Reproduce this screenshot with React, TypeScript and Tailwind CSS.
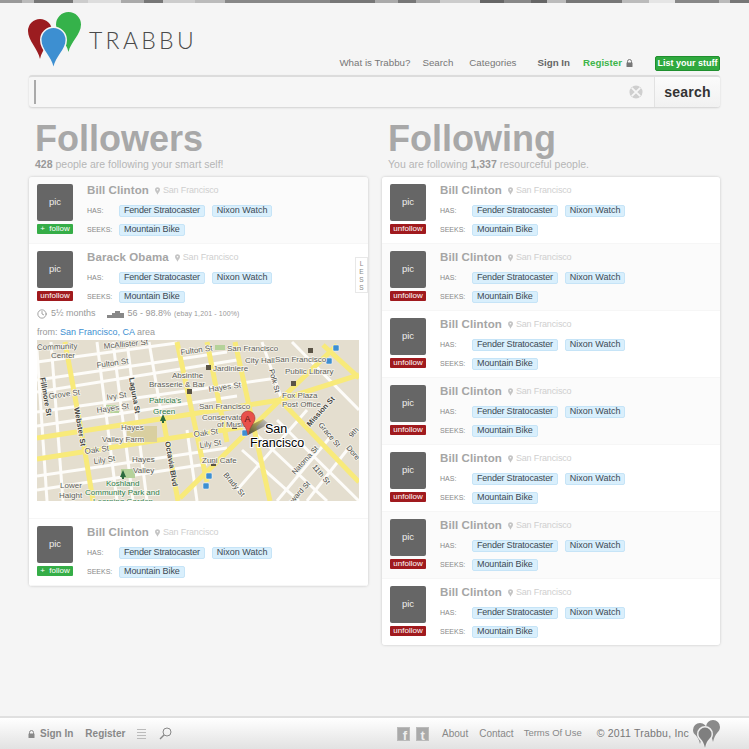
import React from "react";
import { Clock } from "lucide-react";

const font = "font-['Liberation_Sans',Arial,sans-serif]";

const strip: [number, string][] = [
  [22, "#999"], [12, "#bbb"], [39, "#777"], [15, "#ccc"], [33, "#ddd"], [23, "#aaa"], [19, "#777"], [32, "#ccc"],
  [30, "#bbb"], [105, "#888"], [45, "#777"], [23, "#aaa"], [18, "#777"], [24, "#aaa"], [40, "#ccc"], [24, "#666"],
  [27, "#888"], [16, "#666"], [19, "#bbb"], [56, "#777"], [27, "#bbb"], [26, "#e5e5e5"], [44, "#888"], [11, "#bbb"], [19, "#777"],
];

const pin = (cx: number, cy: number, r: number, tip: number) =>
  `M${cx - r} ${cy}A${r} ${r} 0 1 1 ${cx + r} ${cy}C${cx + r} ${cy + r * 0.8} ${cx + 2} ${tip - 10} ${cx} ${tip}C${cx - 2} ${tip - 10} ${cx - r} ${cy + r * 0.8} ${cx - r} ${cy}Z`;

const Logo = () => (
  <svg width="54" height="56" viewBox="28 12 54 56" className="shrink-0">
    <path d={pin(40, 31, 12, 59)} fill="#9b1c20" />
    <path d={pin(68.5, 24.5, 12.5, 52)} fill="#35b24a" />
    <path d={pin(53.5, 40, 13.5, 68)} fill="#f5f5f5" />
    <path d={pin(53.5, 40, 12, 66.5)} fill="#3d8fd1" />
  </svg>
);

const Lock = ({ color }: { color: string }) => (
  <svg width="7" height="8" viewBox="0 0 7 8" className="shrink-0">
    <path d="M1.5 4V2.5a2 2 0 0 1 4 0V4" fill="none" stroke={color} strokeWidth="1" />
    <rect x="0.5" y="3.5" width="6" height="4.5" rx="0.5" fill={color} />
  </svg>
);

const Header = () => (
  <header className="h-[73px] pl-[28px] pr-[29px] flex justify-between">
    <div className="flex pt-[9px]">
      <Logo />
      <span className="ml-[7px] mt-[14px] text-[23px] leading-[28px] tracking-[3.3px] text-[#4a4a4a] font-light font-['Lato',sans-serif] h-fit">TRABBU</span>
    </div>
    <nav className="flex items-center h-fit mt-[52px] text-[9.750px] leading-[16px] text-[#777] whitespace-nowrap">
      <a>What is Trabbu?</a>
      <a className="ml-[12px]">Search</a>
      <a className="ml-[16px]">Categories</a>
      <a className="ml-[21px] font-bold text-[#666]">Sign In</a>
      <a className="ml-[13px] font-bold text-[#3db54a]">Register</a>
      <span className="ml-[4px]"><Lock color="#777" /></span>
      <a className="ml-[22px] w-[65px] h-[15px] leading-[12px] text-center text-[9px] font-bold text-white bg-[#2fa93e] border border-[#1f8f2e] rounded-[2px]">List your stuff</a>
    </nav>
  </header>
);

const SearchBar = () => (
  <div className="mx-[29px] h-[32px] -mt-px flex rounded-[3px] border-t-2 border-[#dcdcdc] shadow-[0_1px_2px_rgba(0,0,0,0.15)] bg-[#f6f6f6]">
    <div className="flex-1 flex items-center pl-[5px] pr-[11px]">
      <span className="w-[2px] h-[24px] bg-[#aaa]" />
      <svg width="14" height="14" viewBox="0 0 15 15" className="ml-auto">
        <circle cx="7.5" cy="7.500" r="7" fill="#cfcfcf" />
        <path d="M3 3l9 9M12 3l-9 9" stroke="#f6f6f6" strokeWidth="2" />
      </svg>
    </div>
    <button className="w-[66px] border-l border-[#e2e2e2] text-[14px] font-bold tracking-[0.2px] text-[#333] bg-gradient-to-b from-[#fbfbfb] to-[#f1f1f1] rounded-r-[3px]">search</button>
  </div>
);

const Tag = ({ children, className }: { children: React.ReactNode; className?: string }) => (
  <span className={`h-[12px] px-[4px] flex items-center text-[9px] whitespace-nowrap text-[#3d4a54] bg-[#d9effc] border border-[#c6e4f7] rounded-[2px] ${className ?? ""}`}>{children}</span>
);

const PlacePin = () => (
  <svg width="5" height="8" viewBox="0 0 6 9" className="shrink-0">
    <path d="M3 9C2 6.500 0 5 0 3a3 3 0 0 1 6 0C6 5 4 6.500 3 9Z" fill="#c4c4c4" />
    <circle cx="3" cy="3" r="1" fill="#fff" />
  </svg>
);

const Person = ({ name, follow, shade, children }: { name: string; follow: boolean; shade?: boolean; children?: React.ReactNode }) => (
  <div className={`pl-[8px] pr-[8px] pt-[7px] pb-[7px] border-b border-[#f6f6f6] last:border-b-0 relative ${shade ? "bg-[#fbfbfb]" : "bg-white"}`}>
    <div className="flex">
      <div className="w-[36px] shrink-0">
        <div className="h-[37px] flex items-center justify-center bg-[#666] rounded-[2px] text-[9.500px] text-[#eee]">pic</div>
        {follow ? (
          <div className="mt-[3px] h-[10px] leading-[10px] text-center text-[8px] text-white bg-[#35ad47] rounded-[1px]">+&nbsp;&nbsp;follow</div>
        ) : (
          <div className="mt-[3px] h-[10px] leading-[10px] text-center text-[8px] text-white bg-[#a01a1e] rounded-[1px]">unfollow</div>
        )}
      </div>
      <div className="ml-[14px] flex-1">
        <div className="flex items-center h-[13px]">
          <span className="text-[11.500px] font-bold tracking-[0.1px] text-[#a5a5a5]">{name}</span>
          <span className="ml-[6px]"><PlacePin /></span>
          <span className="ml-[3px] text-[9px] tracking-[-0.15px] text-[#cfcfcf]">San Francisco</span>
        </div>
        <div className="mt-[8px] flex items-center">
          <span className="w-[32px] text-[7px] text-[#888]">HAS:</span>
          <Tag className="tracking-[-0.2px]">Fender Stratocaster</Tag>
          <span className="ml-[7px]"><Tag>Nixon Watch</Tag></span>
        </div>
        <div className="mt-[7px] flex items-center">
          <span className="w-[32px] text-[7px] text-[#888]">SEEKS:</span>
          <Tag className="tracking-[-0.1px]">Mountain Bike</Tag>
        </div>
      </div>
    </div>
    {children}
  </div>
);

const yellow = [
  "M28 2L48 112L56 161", "M0 98L136 77L243 60", "M0 119L206 87", "M126 78L141 161", "M140 2L170 142",
  "M170 2L190 102", "M198 2L233 161", "M143 158L243 60L300 5", "M243 60L322 142", "M286 5L322 38", "M243 60L322 35",
];
const white = [
  "M0 22L140 3", "M0 40L190 12", "M0 52L200 20", "M0 72L240 38", "M0 86L200 56", "M0 136L190 108", "M0 150L170 124", "M60 2L80 161", "M76 2L96 161",
  "M90 2L110 161", "M0 10L10 161", "M14 2L26 161", "M112 2L125 78", "M225 2L245 60", "M270 70L200 150", "M295 95L240 161", "M310 110L270 161", "M255 2L322 70",
  "M205 110L262 161", "M220 95L290 161", "M240 80L322 161", "M150 90L160 161",
];
const labels: [number, number, string, number?, string?][] = [
  [0, 10, "Community", -2], [14, 18, "Center"], [67, 9, "McAllister St", -6], [144, 15, "Fulton St", -8], [60, 28, "Fulton St", -8],
  [190, 11, "San Francisco"], [208, 23, "City Hall"], [238, 22, "San Francisco"], [248, 34, "Public Library"],
  [176, 31, "Jardiniere"], [135, 38, "Absinthe"], [112, 47, "Brasserie & Bar"], [172, 52, "Hayes St", -8],
  [12, 59, "Grove St", -8], [70, 60, "Ivy St", -8], [60, 73, "Hayes St", -8], [112, 63, "Patricia's", 0, "#2d7a46"], [116, 74, "Green", 0, "#2d7a46"],
  [162, 69, "San Francisco"], [165, 80, "Conservatory"], [180, 87, "of Music"], [245, 58, "Fox Plaza"], [245, 67, "Post Office"],
  [84, 90, "Hayes"], [65, 102, "Valley Farm"], [157, 97, "Oak St", -8], [48, 114, "Oak St", -8], [163, 108, "Lily St", -8], [57, 124, "Lily St", -8],
  [95, 122, "Hayes"], [96, 133, "Valley"], [165, 123, "Zuni Cafe"], [23, 148, "Lower"], [22, 158, "Haight"],
  [69, 146, "Koshland", 0, "#2d7a46"], [48, 155, "Community Park and", 0, "#2d7a46"], [56, 164, "Learning Garden", 0, "#2d7a46"],
];
const tilted: [number, number, string, number][] = [
  [37, 68, "Webster St", 80], [128, 102, "Octavia Blvd", 80], [3, 38, "Fillmore St", 80], [92, 38, "Laguna St", 80],
  [232, 30, "Polk St", 75], [273, 87, "Mission St", -48], [281, 85, "Grace St", 50], [315, 98, "9th", -48], [309, 108, "Dore", 50],
  [258, 135, "Natoma St", -48], [275, 127, "11th St", 50], [186, 135, "Brady St", 50], [250, 170, "Howard St", -48],
];
const transit = [[205, 90], [296, 5], [289, 18], [169, 133], [166, 143]];
const trees = [[126, 74], [86, 130]];
const dark = [[169, 25], [174, 121], [150, 49], [271, 8], [254, 41], [195, 84]];

const MapView = () => (
  <svg width="322" height="161" viewBox="0 0 322 161" className="block mt-[2px] font-['Liberation_Sans',sans-serif]">
    <defs>
      <linearGradient id="pin-shadow" x1="0" y1="1" x2="1" y2="0">
        <stop offset="0" stopColor="#222" stopOpacity="0.8" />
        <stop offset="1" stopColor="#222" stopOpacity="0.1" />
      </linearGradient>
    </defs>
    <rect width="322" height="161" fill="#e4decf" />
    {white.map((d) => <path key={d} d={d} stroke="#fdfcf9" strokeWidth="3" fill="none" />)}
    {yellow.map((d) => <path key={d} d={d} stroke="#f8ea7a" strokeWidth="5" fill="none" />)}
    <rect x="90" y="86" width="30" height="16" fill="#d9cfa0" />
    <rect x="69" y="65" width="13" height="8" fill="#b5d29a" />
    <rect x="84" y="129" width="14" height="9" fill="#b5d29a" />
    <rect x="178" y="5" width="10" height="5" fill="#b5d29a" />
    {transit.map(([x, y]) => <rect key={x} x={x} y={y} width="6" height="6" rx="1" fill="#3d8fd1" stroke="#fff" strokeWidth="0.500" />)}
    {trees.map(([x, y]) => <path key={x} d={`M${x} ${y}l3 7h-2v2h-2v-2h-2Z`} fill="#2d6b3f" />)}
    {dark.map(([x, y]) => <rect key={x} x={x} y={y} width="5" height="5" fill="#5a5346" />)}
    {labels.map(([x, y, t, a, c]) => (
      <text key={`${t}${x}`} x={x} y={y} fontSize="8" fill={c ?? "#5d5d58"} stroke="#f7f5ee" strokeWidth="1.500" paintOrder="stroke" transform={a ? `rotate(${a} ${x} ${y})` : undefined}>{t}</text>
    ))}
    {tilted.map(([x, y, t, a]) => (
      <text key={t} x={x} y={y} fontSize="7.500" fontWeight={a === 80 || t === "Mission St" ? "bold" : undefined} fill="#45453f" stroke="#f7f5ee" strokeWidth="1.500" paintOrder="stroke" transform={`rotate(${a} ${x} ${y})`}>{t}</text>
    ))}
    <path d="M211 95L232 84L226 79L214 85Z" fill="url(#pin-shadow)" />
    <path d={pin(211, 78, 7, 95)} fill="#e8514b" stroke="#8c2a26" strokeWidth="0.500" />
    <text x="207.500" y="82" fontSize="9" fill="#5d1512">A</text>
    <text x="228" y="93" fontSize="12.500" fill="#000" stroke="#fff" strokeWidth="2" paintOrder="stroke">San</text>
    <text x="213" y="107" fontSize="12.500" fill="#000" stroke="#fff" strokeWidth="2" paintOrder="stroke">Francisco</text>
  </svg>
);

const Details = () => (
  <div className="mt-[4px]">
    <div className="flex items-center h-[14px] text-[9px] text-[#999]">
      <Clock size={10} strokeWidth={1.6} className="text-[#777]" />
      <span className="ml-[4px]">5½ months</span>
      <svg width="17" height="7" viewBox="0 0 17 7" className="ml-[11px]">
        <path d="M0 4h5V2h3V0h5v2h4v5H0Z" fill="#888" />
      </svg>
      <span className="ml-[4px]">56 - 98.8%</span>
      <span className="ml-[3px] text-[7px] tracking-[0.1px]">(ebay 1,201 - 100%)</span>
    </div>
    <div className="mt-[5px] h-[12px] text-[9px] leading-[12px] text-[#999]">from: <span className="text-[#3d8fd1]">San Francisco, CA</span> area</div>
    <MapView />
    <div className="h-[10px]" />
  </div>
);

const Social = ({ children, className }: { children: React.ReactNode; className?: string }) => (
  <span className={`block w-[13px] h-[14px] bg-[#a9a9a9] border border-[#bbb] text-[#eee] text-[13px] leading-[15px] font-bold overflow-hidden ${className ?? ""}`}>{children}</span>
);

const Footer = () => (
  <footer className="mt-auto h-[33px] pl-[28px] pr-[28px] border-t-2 border-[#e0e0e0] bg-gradient-to-b from-white to-[#e2e2e2] flex items-center text-[#888]">
    <Lock color="#888" />
    <span className="ml-[5px] text-[10px] font-bold">Sign In</span>
    <span className="ml-[12px] text-[10px] font-bold">Register</span>
    <div className="ml-[12px] w-[9px] flex flex-col gap-[2px]">
      <i className="h-px bg-[#bbb]" /><i className="h-px bg-[#bbb]" /><i className="h-px bg-[#bbb]" /><i className="h-px bg-[#bbb]" />
    </div>
    <svg width="13" height="13" viewBox="0 0 13 13" className="ml-[13px]">
      <circle cx="8" cy="5" r="4" fill="none" stroke="#888" />
      <path d="M5 8L1 12" stroke="#888" strokeWidth="1.500" />
    </svg>
    <span className="ml-auto"><Social className="text-right pr-[2px]">f</Social></span>
    <span className="ml-[6px]"><Social className="text-center">t</Social></span>
    <span className="ml-[13px] text-[10px]">About</span>
    <span className="ml-[11px] text-[10px]">Contact</span>
    <span className="ml-[10px] text-[9.500px]">Terms Of Use</span>
    <span className="ml-[15px] text-[10.500px] tracking-[0.2px] text-[#777]">© 2011 Trabbu, Inc</span>
    <svg width="28" height="30" viewBox="694 719 28 30" className="ml-[4px] self-start mt-px">
      <path d={pin(701, 730, 7, 744)} fill="#8a8a8a" />
      <path d={pin(714, 727, 7, 742)} fill="#8a8a8a" />
      <path d={pin(706, 734, 8, 750)} fill="#eee" />
      <path d={pin(706, 734, 6.500, 748)} fill="#7f7f7f" />
    </svg>
  </footer>
);

export default function App() {
  return (
    <div className={`min-h-[749px] flex flex-col bg-[#f5f5f5] ${font}`}>
      <div className="flex h-[3px]">
        {strip.map(([w, c], i) => <span key={i} className="h-full" style={{ width: w, background: c }} />)}
      </div>
      <Header />
      <SearchBar />
      <main className="mt-[13px] px-[29px] grid grid-cols-[339px_338px] gap-x-[14px] items-start">
        <section>
          <div className="pl-[6px]">
            <h1 className="text-[36px] leading-[38px] font-bold text-[#a8a8a8]">Followers</h1>
            <p className="text-[10.500px] leading-[12px] text-[#b5b5b5]"><b className="text-[#999]">428</b> people are following your smart self!</p>
          </div>
          <div className="mt-[7px] rounded-[3px] shadow-[0_0_3px_rgba(0,0,0,0.2)] overflow-hidden relative">
            <Person name="Bill Clinton" follow shade />
            <Person name="Barack Obama" follow={false}><Details /></Person>
            <Person name="Bill Clinton" follow />
            <div className="absolute right-0 top-[80px] w-[13px] h-[36px] bg-white border border-[#e8e8e8] text-[6.500px] leading-[8px] text-center text-[#888] pt-[2px]">L<br />E<br />S<br />S</div>
          </div>
        </section>
        <section>
          <div className="pl-[6px]">
            <h1 className="text-[36px] leading-[38px] font-bold text-[#a8a8a8]">Following</h1>
            <p className="text-[10.500px] leading-[12px] text-[#b5b5b5]">You are following <b className="text-[#999]">1,337</b> resourceful people.</p>
          </div>
          <div className="mt-[7px] rounded-[3px] shadow-[0_0_3px_rgba(0,0,0,0.2)] overflow-hidden">
            {[0, 1, 2, 3, 4, 5, 6].map((i) => <Person key={i} name="Bill Clinton" follow={false} shade={i % 2 === 1} />)}
          </div>
        </section>
      </main>
      <Footer />
    </div>
  );
}
